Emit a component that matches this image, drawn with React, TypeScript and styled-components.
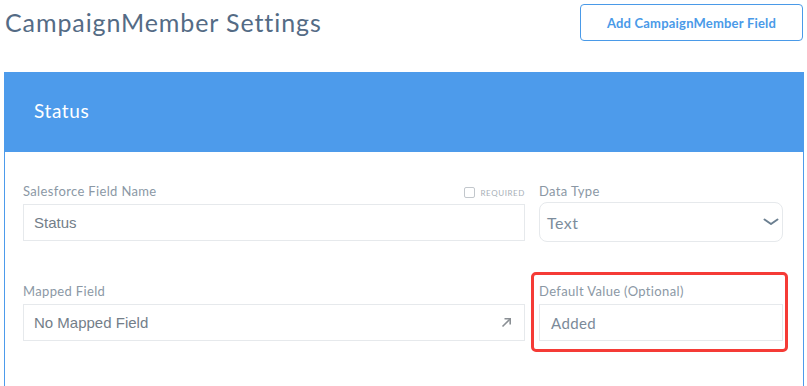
import React from "react";
import styled, { createGlobalStyle } from "styled-components";

const GlobalStyle = createGlobalStyle`
	html, body {
		margin: 0;
		padding: 0;
		background: #ffffff;
	}
	body {
		font-family: Lato, "Open Sans", sans-serif;
	}
`;

const Page = styled.div`
	width: 807px;
	height: 386px;
	overflow: hidden;
	padding: 4px 4px 0 4px;
	box-sizing: border-box;
`;

const TopBar = styled.div`
	display: flex;
	justify-content: space-between;
	align-items: center;
	height: 37px;
`;

const Title = styled.h1`
	margin: 0 0 2px 1px;
	font-size: 25px;
	font-weight: 400;
	color: #546b85;
	letter-spacing: 0.9px;
`;

const AddButton = styled.button`
	width: 223px;
	height: 37px;
	border: 1px solid #4a9ae8;
	border-radius: 4px;
	background: #ffffff;
	color: #4a9ae8;
	font-family: Lato, sans-serif;
	font-size: 13px;
	font-weight: 700;
	letter-spacing: 0.2px;
	cursor: pointer;
`;

const Card = styled.section`
	margin-top: 31px;
	width: 800px;
`;

const CardHeader = styled.div`
	height: 80px;
	box-sizing: border-box;
	background: #4d9beb;
	display: flex;
	align-items: center;
	padding: 0 0 4px 30px;
	color: #ffffff;
	font-size: 19px;
	letter-spacing: 0.6px;
`;

const CardBody = styled.div`
	border-left: 1px solid #4d9beb;
	border-right: 1px solid #4d9beb;
	padding: 31px 20px 60px 18px;
	display: grid;
	grid-template-columns: 502px 244px;
	column-gap: 14px;
	row-gap: 41px;
	align-items: start;
`;

const Field = styled.div<{ $highlight?: boolean }>`
	display: flex;
	flex-direction: column;
	position: relative;

	${(p) =>
		p.$highlight &&
		`
		&::after {
			content: "";
			position: absolute;
			top: -11px;
			bottom: -11px;
			left: -8px;
			right: -5px;
			border: 3px solid #f53b36;
			border-radius: 5px;
			pointer-events: none;
		}
	`}
`;

const LabelRow = styled.div<{ $gap?: number }>`
	display: flex;
	justify-content: space-between;
	align-items: center;
	height: 16px;
	margin-bottom: ${(p) => p.$gap ?? 5}px;
`;

const Label = styled.label`
	font-size: 13px;
	color: #8b98a5;
	letter-spacing: 0.35px;
`;

const Required = styled.span`
	display: flex;
	align-items: center;
	gap: 5px;
	margin-top: 3px;
	font-size: 8px;
	letter-spacing: 0.6px;
	color: #a8b0b8;
	text-transform: uppercase;
`;

const CheckBox = styled.span`
	width: 9px;
	height: 9px;
	border: 1px solid #c2c7cc;
	border-radius: 2px;
`;

const Input = styled.div<{ $sans?: boolean; $pad?: number }>`
	height: 37px;
	box-sizing: border-box;
	border: 1px solid #e6e9ec;
	display: flex;
	align-items: center;
	justify-content: space-between;
	padding: 0 12px 0 ${(p) => p.$pad ?? 10}px;
	font-family: ${(p) => (p.$sans ? '"Liberation Sans", Arial, sans-serif' : "Lato, sans-serif")};
	font-size: 15px;
	color: ${(p) => (p.$sans ? "#737e89" : "#7b8a99")};
	letter-spacing: ${(p) => (p.$sans ? 0 : 0.4)}px;
`;

const Select = styled.div`
	height: 40px;
	box-sizing: border-box;
	border: 1px solid #e6e9ec;
	border-radius: 8px;
	display: flex;
	align-items: center;
	justify-content: space-between;
	padding: 0 3px 0 7px;
	font-size: 16px;
	letter-spacing: 0.5px;
	color: #7d8d9c;
`;

const Chevron = () => (
	<svg width="16" height="8" viewBox="0 0 16 8">
		<polyline points="1.5,1.5 8,6 14.5,1.5" fill="none" stroke="#6b7f90" strokeWidth="2" strokeLinecap="round" strokeLinejoin="round" />
	</svg>
);

const LinkArrow = () => (
	<svg width="11" height="11" viewBox="0 0 11 11">
		<line x1="1.5" y1="9.5" x2="9" y2="2" stroke="#8a8f94" strokeWidth="1.6" />
		<polyline points="3.5,1.8 9.2,1.8 9.2,7.5" fill="none" stroke="#8a8f94" strokeWidth="1.6" />
	</svg>
);

export default function App() {
	return (
		<>
			<GlobalStyle />
			<Page>
				<TopBar>
					<Title>CampaignMember Settings</Title>
					<AddButton>Add CampaignMember Field</AddButton>
				</TopBar>
				<Card>
					<CardHeader>Status</CardHeader>
					<CardBody>
						<Field>
							<LabelRow>
								<Label>Salesforce Field Name</Label>
								<Required><CheckBox />Required</Required>
							</LabelRow>
							<Input $sans>Status</Input>
						</Field>
						<Field>
							<LabelRow $gap={3}>
								<Label>Data Type</Label>
							</LabelRow>
							<Select>
								Text
								<Chevron />
							</Select>
						</Field>
						<Field>
							<LabelRow>
								<Label>Mapped Field</Label>
							</LabelRow>
							<Input $sans>
								No Mapped Field
								<LinkArrow />
							</Input>
						</Field>
						<Field $highlight>
							<LabelRow>
								<Label>Default Value (Optional)</Label>
							</LabelRow>
							<Input $pad={11}>Added</Input>
						</Field>
					</CardBody>
				</Card>
			</Page>
		</>
	);
}
